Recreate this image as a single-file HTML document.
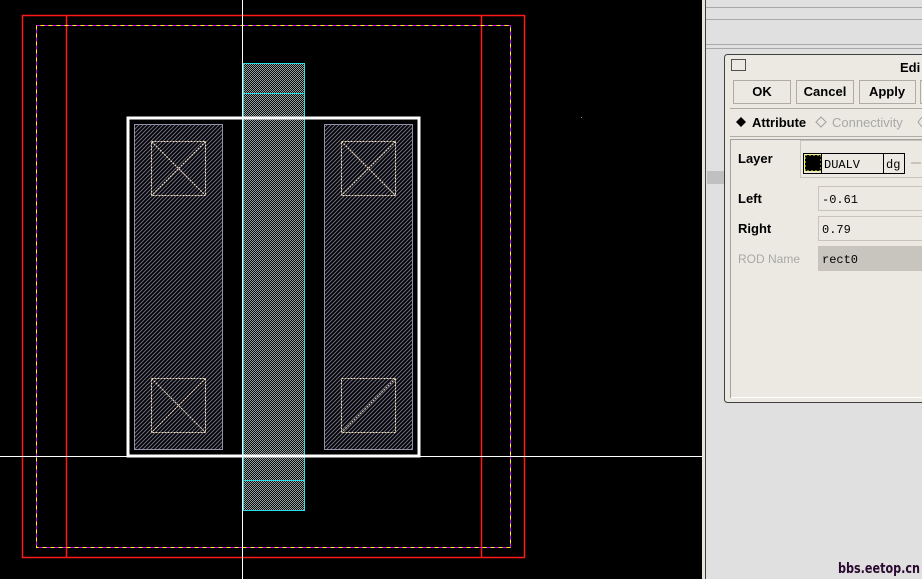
<!DOCTYPE html>
<html><head><meta charset="utf-8"><style>
html,body{margin:0;padding:0;background:#000;width:922px;height:579px;overflow:hidden}
svg{display:block}
text{font-family:"Liberation Sans",sans-serif}
.b{font-weight:bold;font-size:13px;fill:#000}
.m{font-family:"Liberation Mono",monospace;font-size:12px;fill:#000}
</style></head><body>
<svg width="922" height="579" xmlns="http://www.w3.org/2000/svg">
<defs>
<pattern id="hatch" width="4" height="4" patternUnits="userSpaceOnUse">
<rect width="4" height="4" fill="#000"/>
<path d="M0,4 L4,0 M-1,1 L1,-1 M3,5 L5,3" stroke="#6e6e84" stroke-width="1"/>
</pattern>
<pattern id="chk" width="2" height="2" patternUnits="userSpaceOnUse">
<rect width="2" height="2" fill="#101010"/>
<rect width="1" height="1" fill="#b8c8c8"/>
<rect x="1" y="1" width="1" height="1" fill="#b8c8c8"/>
</pattern>
</defs>
<rect width="702" height="579" fill="#000"/>
<rect x="22.5" y="15.5" width="502" height="542" fill="none" stroke="#ff1a1a" stroke-width="1.5"/>
<line x1="66.5" y1="15" x2="66.5" y2="558" stroke="#ff1a1a" stroke-width="1.5"/>
<line x1="481.5" y1="15" x2="481.5" y2="558" stroke="#ff1a1a" stroke-width="1.5"/>
<rect x="36.5" y="25.5" width="474" height="522" fill="none" stroke="#ffff00" stroke-width="1"/>
<rect x="36.5" y="25.5" width="474" height="522" fill="none" stroke="#cc00ff" stroke-width="1" stroke-dasharray="4,4"/>
<rect x="134.5" y="124.5" width="88" height="325" fill="url(#hatch)" stroke="#9090a8"/>
<rect x="324.5" y="124.5" width="88" height="325" fill="url(#hatch)" stroke="#9090a8"/>
<g fill="none" stroke="#f0dcc0" stroke-width="1" stroke-dasharray="2,1">
<rect x="151.5" y="141.5" width="54" height="54"/><path d="M151.5,141.5L205.5,195.5M205.5,141.5L151.5,195.5"/>
<rect x="151.5" y="378.5" width="54" height="54"/><path d="M151.5,378.5L205.5,432.5M205.5,378.5L151.5,432.5"/>
<rect x="341.5" y="141.5" width="54" height="54"/><path d="M341.5,141.5L395.5,195.5M395.5,141.5L341.5,195.5"/>
<rect x="341.5" y="378.5" width="54" height="54"/><path d="M395.5,378.5L341.5,432.5"/>
</g>
<rect x="243" y="63.5" width="61" height="447" fill="url(#chk)" opacity="0.8"/>
<rect x="243.5" y="63.5" width="61" height="447" fill="none" stroke="#2ae0e8"/>
<line x1="243" y1="93.5" x2="305" y2="93.5" stroke="#2ae0e8"/>
<line x1="243" y1="480.5" x2="305" y2="480.5" stroke="#2ae0e8"/>
<rect x="128" y="118" width="291" height="338" fill="none" stroke="#fff" stroke-width="3"/>
<line x1="242.5" y1="0" x2="242.5" y2="579" stroke="#fff"/>
<line x1="0" y1="456.5" x2="702" y2="456.5" stroke="#fff"/>
<rect x="581" y="117" width="1" height="1" fill="#888"/>
<rect x="702" y="0" width="3" height="579" fill="#e8e4dc"/>
<rect x="705" y="0" width="1" height="579" fill="#404040"/>
<rect x="706" y="0" width="216" height="579" fill="#e0e0e0"/>
<rect x="706" y="7" width="216" height="1" fill="#a8a8a8"/>
<rect x="706" y="19" width="216" height="1" fill="#a8a8a8"/>
<rect x="706" y="44" width="216" height="1" fill="#a8a8a8"/>
<rect x="706" y="48" width="216" height="1" fill="#a8a8a8"/>
<rect x="707" y="171" width="17" height="13" fill="#c0c0c0"/>
<rect x="724.5" y="54.5" width="210" height="348" rx="3" fill="#ece9e3" stroke="#404040"/>
<rect x="731.5" y="59.5" width="14" height="11" fill="#ece9e3" stroke="#505050"/>
<text x="900" y="72" class="b" font-size="15">Edi</text>
<g fill="#ece9e3" stroke="#b0aca4">
<rect x="733.5" y="80.5" width="57" height="23"/>
<rect x="796.5" y="80.5" width="57" height="23"/>
<rect x="859.5" y="80.5" width="56" height="23"/>
<rect x="920.5" y="80.5" width="10" height="23"/>
</g>
<text x="762" y="96" class="b" text-anchor="middle">OK</text>
<text x="825" y="96" class="b" text-anchor="middle">Cancel</text>
<text x="887" y="96" class="b" text-anchor="middle">Apply</text>
<line x1="730" y1="108.5" x2="922" y2="108.5" stroke="#b0aca4"/>
<path d="M741,117l5,5-5,5-5-5z" fill="#000"/>
<text x="752" y="127" class="b">Attribute</text>
<path d="M821,117l5,5-5,5-5-5z" fill="none" stroke="#a0a0a0"/>
<text x="832" y="127" font-size="13" fill="#a8a8a8">Connectivity</text>
<path d="M922,117l-4,5 4,5" fill="none" stroke="#a0a0a0"/>
<line x1="730" y1="136.5" x2="922" y2="136.5" stroke="#b0aca4"/>
<rect x="730.5" y="139.5" width="195" height="258" fill="#ece9e3" stroke="#a0a0a0"/>
<line x1="731" y1="397.5" x2="922" y2="397.5" stroke="#fff"/>
<text x="738" y="163" class="b">Layer</text>
<rect x="800.5" y="140.5" width="130" height="37" fill="none" stroke="#c8c4bc"/>
<rect x="803.5" y="153.5" width="101" height="20" fill="#ece9e3" stroke="#000"/>
<rect x="805" y="155" width="16" height="16" fill="#000" stroke="#ff0" stroke-width="1" stroke-dasharray="2,2"/>
<line x1="821.5" y1="153" x2="821.5" y2="174" stroke="#000"/>
<line x1="883.5" y1="153" x2="883.5" y2="174" stroke="#000"/>
<text x="824" y="168" class="m">DUALV</text>
<text x="886" y="168" class="m">dg</text>
<rect x="911" y="162" width="10" height="2" fill="#c8c4bc"/>
<text x="738" y="203" class="b">Left</text>
<text x="738" y="233" class="b">Right</text>
<text x="738" y="263" font-size="12" fill="#a8a8a8">ROD Name</text>
<rect x="818.5" y="186.5" width="110" height="24" fill="#ece9e3" stroke="#c8c4bc"/>
<rect x="818.5" y="216.5" width="110" height="24" fill="#ece9e3" stroke="#c8c4bc"/>
<rect x="818.5" y="246.5" width="110" height="24" fill="#c8c5bf" stroke="#c8c4bc"/>
<text x="822" y="203" class="m">-0.61</text>
<text x="822" y="233" class="m">0.79</text>
<text x="822" y="263" class="m">rect0</text>
<text x="838" y="573" font-weight="bold" font-size="14" fill="#2a0a30" style="font-family:'DejaVu Sans Condensed','Liberation Sans',sans-serif" textLength="82" lengthAdjust="spacingAndGlyphs">bbs.eetop.cn</text>
</svg>
</body></html>
